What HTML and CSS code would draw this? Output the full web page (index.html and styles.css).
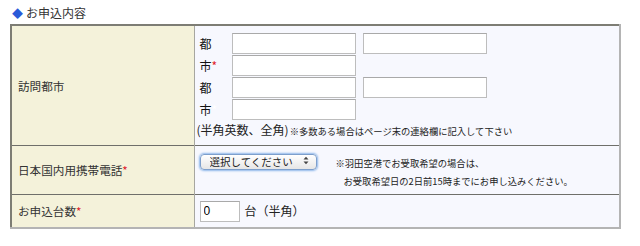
FILE: index.html
```html
<!DOCTYPE html>
<html lang="ja">

<head>
    <meta charset="UTF-8">
    <title>お申込内容</title>
    <link rel="stylesheet" href="styles.css">
</head>

<body>
    <h2 class="section_title"><span class="mark">◆</span>お申込内容</h2>
    <table class="form_table">
        <colgroup>
            <col class="col_head">
            <col>
        </colgroup>
        <tr class="row_city">
            <th>訪問都市</th>
            <td>
                <div class="city_line">
                    <span class="city_label">都</span>
                    <input type="text" class="txt">
                    <input type="text" class="txt">
                </div>
                <div class="city_line">
                    <span class="city_label">市<span class="req">*</span></span>
                    <input type="text" class="txt">
                </div>
                <div class="city_line">
                    <span class="city_label">都</span>
                    <input type="text" class="txt">
                    <input type="text" class="txt">
                </div>
                <div class="city_line">
                    <span class="city_label">市<span class="req blank">*</span></span>
                    <input type="text" class="txt">
                </div>
                <p class="note">(半角英数、全角)<small>※多数ある場合はページ末の連絡欄に記入して下さい</small></p>
            </td>
        </tr>
        <tr class="row_phone">
            <th>日本国内用携帯電話<span class="req">*</span></th>
            <td>
                <div class="phone_wrap">
                    <div class="sel_box">
                        <select class="sel">
                            <option>選択してください</option>
                        </select>
                        <svg class="sel_arrow" width="6" height="9" viewBox="0 0 6 9">
                            <path d="M0.5 3.5 L3 0.8 L5.5 3.5 Z M0.5 5.5 L3 8.2 L5.5 5.5 Z" fill="#444"/>
                        </svg>
                    </div>
                    <div class="phone_note">
                        <p>※羽田空港でお受取希望の場合は、</p>
                        <p class="indent">お受取希望日の2日前15時までにお申し込みください。</p>
                    </div>
                </div>
            </td>
        </tr>
        <tr class="row_num">
            <th>お申込台数<span class="req">*</span></th>
            <td>
                <input type="text" class="num" value="0"><span class="unit">台（半角）</span>
            </td>
        </tr>
    </table>
</body>

</html>
```

FILE: styles.css
```css
body {
    margin: 0;
    padding: 6px 10px;
    font-family: "Noto Sans CJK JP", "Liberation Sans", sans-serif;
    font-size: 12px;
    color: #222;
    background: #fff;
}

.section_title {
    margin: 0 0 4px 2px;
    height: 14px;
    line-height: 14px;
    font-size: 12px;
    font-weight: normal;
    color: #333;
}

.section_title .mark {
    color: #2a5ad8;
    font-size: 11px;
    margin-right: 3px;
}

.form_table {
    width: 611px;
    table-layout: fixed;
    border-collapse: collapse;
    border-top: 2px solid #7d7d74;
    border-left: 2px solid #7d7d74;
    border-right: 2px solid #b4b4b4;
    border-bottom: 2px solid #b4b4b4;
}

.col_head {
    width: 183px;
}

.form_table th {
    padding: 0 0 0 6px;
    text-align: left;
    font-weight: normal;
    font-size: 11.6px;
    background: #f4f2da;
    border-right: 1px solid #a7a7a0;
    vertical-align: middle;
    color: #333;
}

.form_table td {
    background: #f7f8fe;
    padding: 0 5px;
    vertical-align: top;
}

.form_table tr + tr th,
.form_table tr + tr td {
    border-top: 1px solid #6f6f6a;
}

.row_city td {
    padding-top: 6px;
    padding-bottom: 5px;
}

.row_phone td {
    height: 48px;
    padding-top: 0;
    padding-bottom: 0;
}

.row_num td {
    height: 32px;
    padding-top: 0;
    padding-bottom: 0;
    vertical-align: middle;
}

.req {
    color: #e0202a;
}

.req.blank {
    color: #fff;
}

.city_line {
    display: flex;
    align-items: center;
    height: 22px;
}

.city_label {
    width: 32px;
    font-size: 12px;
    color: #111;
}

.txt {
    box-sizing: border-box;
    width: 124px;
    height: 21px;
    margin: 0 7px 0 0;
    padding: 0 3px;
    border: 1px solid #bdbdbd;
    border-top-color: #a9a9a9;
    background: #fff;
}

.note {
    margin: 1px 0 0 -3px;
    line-height: 18px;
    font-size: 12px;
}

.note small {
    font-size: 9.3px;
    margin-left: 1px;
}

.phone_wrap {
    display: flex;
    padding-top: 6px;
}

.sel_box {
    position: relative;
    width: 117px;
    height: 16px;
    margin-right: 19px;
}

.sel {
    -webkit-appearance: none;
    appearance: none;
    box-sizing: border-box;
    width: 117px;
    height: 16px;
    padding: 0 0 0 9px;
    border: 1px solid #7d9fcc;
    border-radius: 4px;
    background: linear-gradient(#ffffff, #e6e6e6);
    box-shadow: 0 0 2px 1px #8fb8ea;
    font-family: inherit;
    font-size: 10.5px;
    line-height: 14px;
    color: #222;
}

.sel_arrow {
    position: absolute;
    right: 8px;
    top: 4px;
}

.phone_note {
    font-size: 9.3px;
    padding-top: 2px;
}

.phone_note p {
    margin: 0;
    line-height: 18px;
}

.phone_note .indent {
    padding-left: 8px;
}

.num {
    box-sizing: border-box;
    width: 40px;
    height: 21px;
    margin: 0 5px 0 0;
    padding: 0 3px;
    border: 1px solid #bdbdbd;
    border-top-color: #a9a9a9;
    font-family: "Liberation Sans", sans-serif;
    font-size: 12px;
    background: #fff;
    vertical-align: middle;
}

.unit {
    vertical-align: middle;
}
```
